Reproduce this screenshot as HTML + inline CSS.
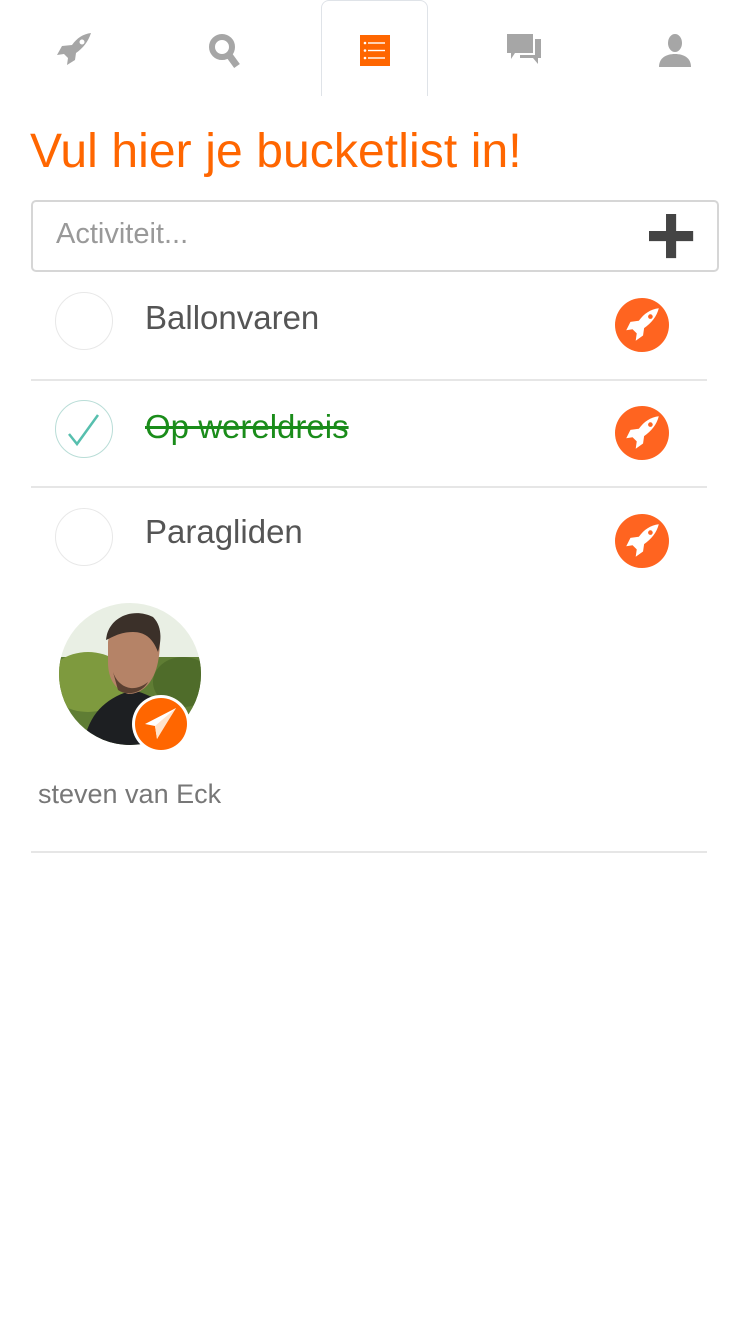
<!DOCTYPE html>
<html><head><meta charset="utf-8"><style>
body{margin:0;width:750px;height:1334px;background:#fff;font-family:"Liberation Sans",sans-serif;position:relative;overflow:hidden}
.a{position:absolute}
.tab{left:321px;top:0;width:107px;height:96px;border:1.5px solid #dfe3e8;border-bottom:none;border-radius:8px 8px 0 0;box-sizing:border-box}
.title{left:30px;top:124px;font-size:48px;color:#ff6600;font-weight:300;letter-spacing:0.1px}
.inp{left:31px;top:200px;width:688px;height:72px;border:2px solid #d6d6d6;border-radius:5px;box-sizing:border-box}
.ph{left:56px;top:218px;font-size:29px;color:#999}
.chk{width:58px;height:58px;border:1.5px solid #e8e8e8;border-radius:50%;box-sizing:border-box}
.txt{font-size:33px;color:#555}
.hr{left:31px;width:676px;height:2px;background:#e6e6e6}
</style></head><body>
<div class="a tab"></div>
<svg class="a" style="left:55px;top:31px" width="40" height="40" viewBox="0 0 40 40"><path d="M36 2C28 3 22 7 17 14L7 15 2 24 9 23 13 27 12 34 20 29 21 22C28 17 33 11 36 2Z" fill="#a6a6a6"/><circle cx="27" cy="11" r="2.5" fill="#fff"/></svg>
<svg class="a" style="left:208px;top:33px" width="36" height="36" viewBox="0 0 36 36"><circle cx="14" cy="14" r="10" fill="none" stroke="#a6a6a6" stroke-width="6"/><path d="M21 22L29 33" stroke="#a6a6a6" stroke-width="7"/></svg>
<svg class="a" style="left:360px;top:35px" width="30" height="31" viewBox="0 0 30 31"><rect width="30" height="31" fill="#ff6600"/><g fill="#fff"><circle cx="5" cy="8" r="1.3"/><circle cx="5" cy="15.5" r="1.3"/><circle cx="5" cy="23" r="1.3"/><rect x="8" y="7.3" width="17" height="1.4"/><rect x="8" y="14.8" width="17" height="1.4"/><rect x="8" y="22.3" width="17" height="1.4"/></g></svg>
<svg class="a" style="left:507px;top:34px" width="36" height="33" viewBox="0 0 36 33"><path d="M0 0H26V19H8L4 25V19H0Z" fill="#a6a6a6"/><path d="M28 5H34V24H31V30L26 24H13V21H28Z" fill="#a6a6a6"/></svg>
<svg class="a" style="left:658px;top:34px" width="34" height="33" viewBox="0 0 34 33"><ellipse cx="17" cy="9" rx="7" ry="9" fill="#a6a6a6"/><path d="M1 33C1 24 8 20 17 20S33 24 33 33Z" fill="#a6a6a6"/></svg>

<div class="a title">Vul hier je bucketlist in!</div>
<div class="a inp"></div>
<div class="a ph">Activiteit...</div>
<svg class="a" style="left:647px;top:212px" width="48" height="48" viewBox="0 0 48 48"><path d="M18.5 0H29.5V18.5H48V29.5H29.5V48H18.5V29.5H0V18.5H18.5Z" fill="#444" transform="translate(2,2) scale(0.92)"/></svg>

<div class="a chk" style="left:55px;top:292px"></div>
<div class="a txt" style="left:145px;top:299px">Ballonvaren</div>
<div class="a hr" style="top:379px"></div>
<div class="a chk" style="left:55px;top:400px;border-color:#b9ddd7"></div>
<svg class="a" style="left:66px;top:412px" width="38" height="36" viewBox="0 0 38 36"><path d="M3 22L11 32 32 3" fill="none" stroke="#57bfae" stroke-width="2.5"/></svg>
<div class="a txt" style="left:145px;top:408px;color:#1a8c1a;text-decoration:line-through">Op wereldreis</div>
<div class="a hr" style="top:486px"></div>
<div class="a chk" style="left:55px;top:508px"></div>
<div class="a txt" style="left:145px;top:513px">Paragliden</div>

<svg width="0" height="0" style="position:absolute"><defs><g id="r"><g transform="translate(27,27) scale(1.05) translate(-20,-20)"><path d="M36 4C28 5 22 9 17 16L9 17 5 25 11 24 15 28 14 35 21 30 22 23C29 18 34 12 36 4Z" fill="#fff"/><circle cx="28" cy="12" r="2.2" fill="#ff6420"/></g></g></defs></svg>
<svg class="a" style="left:615px;top:298px" width="54" height="54"><circle cx="27" cy="27" r="27" fill="#ff6420"/><use href="#r"/></svg>
<svg class="a" style="left:615px;top:406px" width="54" height="54"><circle cx="27" cy="27" r="27" fill="#ff6420"/><use href="#r"/></svg>
<svg class="a" style="left:615px;top:514px" width="54" height="54"><circle cx="27" cy="27" r="27" fill="#ff6420"/><use href="#r"/></svg>

<svg class="a" style="left:58px;top:602px" width="145" height="145" viewBox="0 0 145 145">
<defs><clipPath id="c"><circle cx="72" cy="72" r="71"/></clipPath></defs>
<g clip-path="url(#c)">
<rect width="145" height="145" fill="#e9efe4"/>
<rect y="55" width="145" height="90" fill="#5f7d34"/>
<ellipse cx="30" cy="80" rx="40" ry="30" fill="#7e9a3e"/>
<ellipse cx="125" cy="80" rx="30" ry="25" fill="#4f6c2a"/>
<path d="M25 145C30 110 50 95 75 88 100 95 120 108 130 145Z" fill="#1d1f22"/>
<path d="M50 40C52 20 70 10 88 14 102 20 104 40 100 60 96 80 85 92 70 92 58 88 50 78 50 60Z" fill="#b58367"/>
<path d="M48 38C50 15 75 5 95 15 105 25 103 40 100 50 96 40 90 30 75 30 62 30 55 35 48 38Z" fill="#3b3029"/>
<path d="M55 70C60 85 75 92 90 80 85 90 70 95 60 88Z" fill="#5b4031"/>
</g></svg>
<svg class="a" style="left:131px;top:694px" width="60" height="60" viewBox="0 0 60 60"><circle cx="30" cy="30" r="29" fill="#fff"/><circle cx="30" cy="30" r="26" fill="#ff6600"/><path d="M45 14L14 30 24 32 26 45 31 36Z" fill="#fff"/><path d="M45 14L24 32 26 45Z" fill="#ffe3cc"/></svg>
<div class="a" style="left:38px;top:779px;font-size:27px;color:#777;font-weight:300">steven van Eck</div>
<div class="a hr" style="top:851px"></div>
</body></html>
